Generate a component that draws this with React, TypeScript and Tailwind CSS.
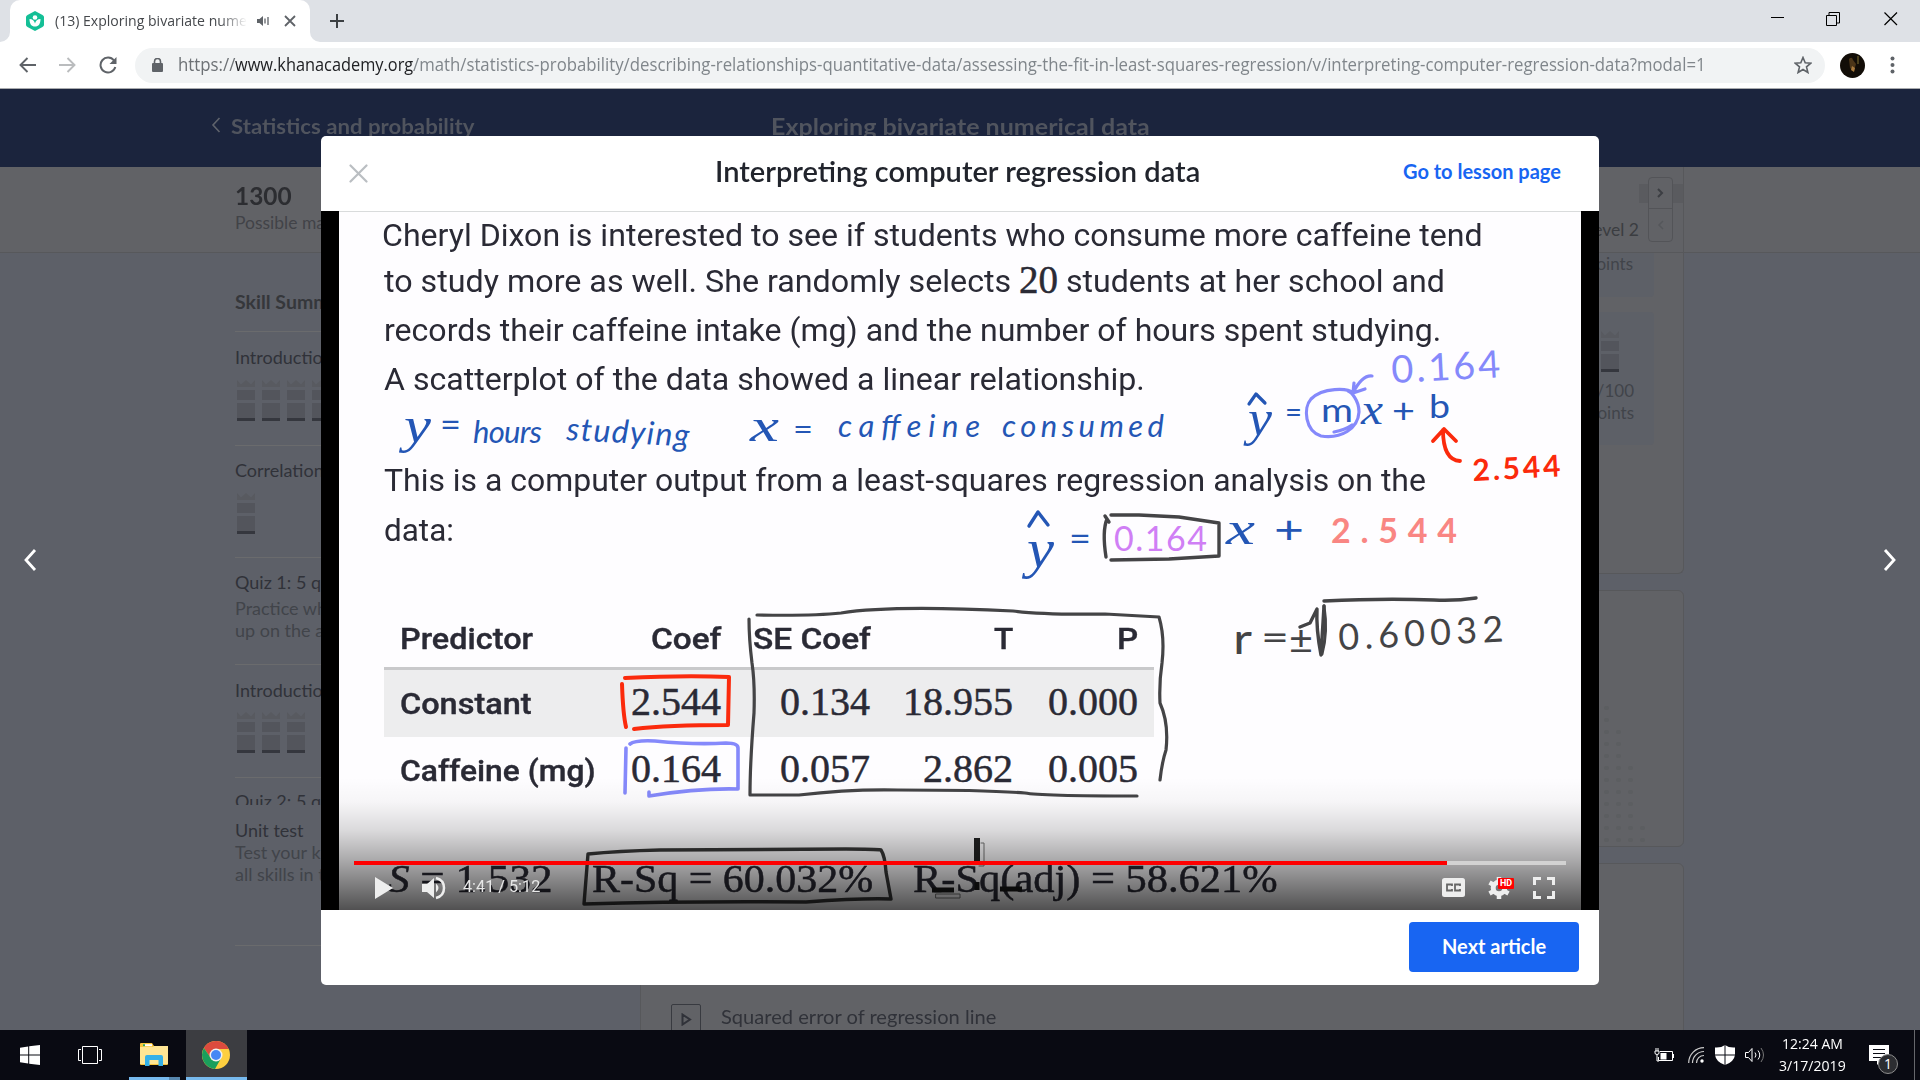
import React, { useLayoutEffect, useRef, useState } from "react";

/** Single line of text stretched or squeezed to an exact width. */
function Fit({ w, className = "", children }: { w: number; className?: string; children: React.ReactNode }) {
  const ref = useRef<HTMLSpanElement>(null);
  const [k, setK] = useState(1);
  useLayoutEffect(() => {
    if (ref.current) setK(w / ref.current.offsetWidth);
  }, [w]);
  return (
    <span className={"block shrink-0 whitespace-nowrap " + className} style={{ width: w }}>
      <span ref={ref} className="inline-block origin-left" style={{ transform: `scaleX(${k})` }}>
        {children}
      </span>
    </span>
  );
}

function Crown() {
  return (
    <svg width="18" height="41" viewBox="0 0 18 41" className="shrink-0">
      <path d="M0 0l4 4.500 5-4.500 5 4.500 4-4.500v7H0z" fill="#585a60" />
      <rect y="10" width="18" height="10" fill="#53555c" />
      <rect y="23" width="18" height="15" fill="#53555c" />
      <rect y="38" width="18" height="3" fill="#35373e" />
    </svg>
  );
}

function TabStrip() {
  return (
    <div className="flex h-[42px] shrink-0 items-stretch bg-[#dee1e6]">
      <svg width="10" height="42" viewBox="0 0 10 42"><path d="M10 32v10H0a10 10 0 0 0 10-10z" fill="#fff" /></svg>
      <div className="flex w-[300px] items-center rounded-t-[10px] bg-white pl-4">
        <svg width="18" height="20" viewBox="0 0 18 20">
          <path d="M9 0l7.500 4Q18 5 18 6v8q0 1-1.500 2L9 20l-7.500-4Q0 15 0 14V6q0-1 1.500-2z" fill="#14bf96" />
          <circle cx="9" cy="6.500" r="2.300" fill="#fff" />
          <path d="M3.500 8c3 0 5 2 5.500 4.500C9.500 10 11.500 8 14.500 8c0 5-2 7.500-5.500 7.500S3.500 13 3.500 8z" fill="#fff" />
        </svg>
        <div className="ml-[11px] w-[192px] text-[14.500px] text-[#45484c] [mask-image:linear-gradient(to_right,#000_86%,transparent)]">
          <Fit w={192}>(13) Exploring bivariate nume</Fit>
        </div>
        <svg className="ml-[10px]" width="13" height="12" viewBox="0 0 13 12">
          <path d="M0 4h2.500L6 1v10L2.500 8H0z" fill="#5f6368" />
          <path d="M8 3.500v5M11 2v8" stroke="#5f6368" strokeWidth="1.300" />
        </svg>
        <svg className="ml-[14px]" width="12" height="12" viewBox="0 0 12 12"><path d="M1 1l10 10M11 1L1 11" stroke="#5f6368" strokeWidth="1.800" /></svg>
      </div>
      <svg width="10" height="42" viewBox="0 0 10 42"><path d="M0 32v10h10A10 10 0 0 1 0 32z" fill="#fff" /></svg>
      <svg className="ml-[9px] mt-[13px]" width="16" height="16" viewBox="0 0 16 16"><path d="M8 1v14M1 8h14" stroke="#3c4043" strokeWidth="2" /></svg>
      <div className="ml-auto flex pr-[22px] pt-3">
        <svg width="14" height="13"><path d="M1 5.500h13" stroke="#000" /></svg>
        <svg className="ml-[42px]" width="14" height="14"><path d="M.5 3.500h10v10H.5zM3 3V.5h10.500V11H11" fill="none" stroke="#000" /></svg>
        <svg className="ml-[44px]" width="14" height="14"><path d="M.5.5l12.500 12.500M13 .5L.5 13" stroke="#000" strokeWidth="1.200" /></svg>
      </div>
    </div>
  );
}

function Toolbar() {
  return (
    <div className="flex h-[47px] shrink-0 items-center border-b border-[#a9abae] bg-white">
      <svg className="ml-[19px]" width="17" height="16" viewBox="0 0 17 16"><path d="M17 8H2M8.500 1L1.500 8l7 7" fill="none" stroke="#5f6368" strokeWidth="1.900" /></svg>
      <svg className="ml-[23px]" width="17" height="16" viewBox="0 0 17 16"><path d="M0 8h15M8.500 1l7 7-7 7" fill="none" stroke="#babcbe" strokeWidth="1.900" /></svg>
      <svg className="ml-[23px]" width="18" height="18" viewBox="0 0 18 18">
        <path d="M15 4.500A7.500 7.500 0 1 0 16.300 11" fill="none" stroke="#5f6368" strokeWidth="2" />
        <path d="M17.500 1v7h-7z" fill="#5f6368" />
      </svg>
      <div className="ml-[18px] flex h-[35px] w-[1690px] items-center rounded-full bg-[#f1f3f4] pl-[17px] pr-[13px]">
        <svg width="11" height="15" viewBox="0 0 11 15">
          <rect y="5" width="11" height="9" rx="1" fill="#5f6368" />
          <path d="M2.500 6V3.500a3 3 0 0 1 6 0V6" fill="none" stroke="#5f6368" strokeWidth="1.600" />
        </svg>
        <div className="-mt-0.5 ml-[15px] flex text-[18px] leading-[30px] text-[#80868b]">
          <Fit w={57} className="text-[#6d7175]">https://</Fit>
          <Fit w={178} className="text-[#202124]">www.khanacademy.org</Fit>
          <Fit w={1293}>/math/statistics-probability/describing-relationships-quantitative-data/assessing-the-fit-in-least-squares-regression/v/interpreting-computer-regression-data?modal=1</Fit>
        </div>
        <svg className="ml-auto" width="18" height="18" viewBox="0 0 18 18"><path d="M9 1.500l2.200 5.300 5.600.4-4.300 3.700 1.400 5.600L9 13.500l-4.900 3 1.400-5.600L1.200 7.200l5.600-.4z" fill="none" stroke="#5f6368" strokeWidth="1.600" /></svg>
      </div>
      <svg className="ml-[15px]" width="25" height="25" viewBox="0 0 25 25">
        <circle cx="12.500" cy="12.500" r="12.500" fill="#120d07" />
        <path d="M9 6q3-3 4 1l3 4-2 7-4-3z" fill="#4b3518" />
        <path d="M12 13l3 2-1 4-3-2z" fill="#a8793d" />
        <path d="M18 3v8" stroke="#5c5126" strokeWidth="1.500" />
      </svg>
      <svg className="ml-[25px]" width="5" height="18" viewBox="0 0 5 18" fill="#5f6368"><circle cx="2.500" cy="2.500" r="2" /><circle cx="2.500" cy="9" r="2" /><circle cx="2.500" cy="15.500" r="2" /></svg>
    </div>
  );
}

function Sidebar() {
  const rule = "border-b border-[#6a6b6d]";
  return (
    <div className="w-[405px] shrink-0 pt-[35px] text-[18px] text-[#303239]">
      <div className={"h-[44px] text-[19.500px] font-bold leading-[28px] text-[#35373b] " + rule}>Skill Summary</div>
      <div className={"h-[114px] pt-[12px] " + rule}>
        <div className="leading-[26px]">Introduction to scatterplots</div>
        <div className="ml-0.5 mt-[10px] flex gap-[7px]"><Crown /><Crown /><Crown /><Crown /></div>
      </div>
      <div className={"h-[112px] pt-[11px] " + rule}>
        <div className="leading-[26px]">Correlation coefficients</div>
        <div className="ml-0.5 mt-[10px] flex"><Crown /></div>
      </div>
      <div className={"h-[107px] pt-[11px] " + rule}>
        <div className="leading-[26px]">Quiz 1: 5 questions</div>
        <div className="mt-0.5 leading-[22px] text-[#41444a]">Practice what you’ve learned, and level<br />up on the above skills</div>
      </div>
      <div className={"h-[113px] pt-[12px] " + rule}>
        <div className="leading-[26px]">Introduction to trend lines</div>
        <div className="ml-0.5 mt-[9px] flex gap-[7px]"><Crown /><Crown /><Crown /></div>
      </div>
      <div className="h-[27px] overflow-hidden pt-[10px] leading-[26px]">Quiz 2: 5 questions</div>
      <div className={"h-[141px] pt-[12px] " + rule}>
        <div className="leading-[26px]">Unit test</div>
        <div className="-mt-0.5 leading-[22px] text-[#41444a]">Test your knowledge of<br />all skills in this unit</div>
      </div>
    </div>
  );
}

const dotColumns = [12, 10, 7, 2];

function CoursePage() {
  return (
    <div className="flex h-full flex-col">
      <div className="flex h-[78px] shrink-0 pl-[211px] pt-[16px] text-[20px] font-bold leading-[42px] text-[#50545e]">
        <svg className="mt-3" width="10" height="16" viewBox="0 0 10 16"><path d="M8.500 1L2 8l6.500 7" fill="none" stroke="#5f636c" strokeWidth="1.600" /></svg>
        <Fit w={243} className="ml-[10px]">Statistics and probability</Fit>
        <Fit w={379} className="ml-[297px] text-[23px]">Exploring bivariate numerical data</Fit>
      </div>
      <div className="flex h-[86px] shrink-0 border-b border-[#57585b] bg-[#616266] pl-[235px]">
        <div className="w-[500px] pt-[14px]">
          <div className="text-[24px] font-bold leading-[30px] text-[#2c2d31]"><Fit w={57}>1300</Fit></div>
          <div className="text-[17.500px] leading-[24px] text-[#414348]">Possible mastery points</div>
        </div>
        <div className="flex w-[949px] justify-end border-r border-[#57585b]">
          <div className="pt-[49px] text-[17.500px] leading-[28px] text-[#3b3d41]">Level 2</div>
          <div className="mt-[17px] h-[19px] w-[9px] bg-[#5a5b5f]" />
          <div className="mt-[10px] flex h-[65px] w-[25px] flex-col rounded-[4px] border border-[#535458] bg-[#616266]">
            <div className="flex h-[31px] items-center justify-center border-b border-[#535458]"><svg width="7" height="10"><path d="M1 1l4 4-4 4" fill="none" stroke="#3c3e43" strokeWidth="2" /></svg></div>
            <div className="flex grow items-center justify-center"><svg width="7" height="10"><path d="M6 1L2 5l4 4" fill="none" stroke="#55575b" strokeWidth="1.500" /></svg></div>
          </div>
          <div className="mt-[17px] h-[19px] w-[10px] bg-[#5a5b5f]" />
        </div>
      </div>
      <div className="flex min-h-0 grow pl-[235px]">
        <Sidebar />
        <div className="flex w-[1044px] shrink-0 flex-col gap-4 text-[18px] text-[#303239]">
          <div className="flex h-[321px] shrink-0 flex-col items-end rounded-b-[6px] border border-t-0 border-[#57585b] bg-[#616266] pr-[29px]">
            <div className="h-[44px] w-[120px] rounded-b-[4px] bg-[#5d6067] pr-[21px] text-right text-[17px] leading-[22px] text-[#41444a]">points</div>
            <div className="mt-[15px] flex h-[133px] w-[120px] flex-col items-end rounded-[4px] bg-[#5d6067] pr-[20px] text-[17px] leading-[22px] text-[#41444a]">
              <div className="mb-[8px] mr-[15px] mt-[19px]"><Crown /></div>
              <div>0/100</div>
              <div>points</div>
            </div>
          </div>
          <div className="flex h-[257px] shrink-0 items-end justify-end gap-[7px] rounded-[6px] border border-[#57585b] bg-[#616266] pb-1 pr-[38px]">
            {dotColumns.map((n, i) => (
              <div key={i} className="flex flex-col gap-[8px]">
                {Array.from({ length: n }, (_, j) => <div key={j} className="h-1 w-[5px] rounded-full bg-[#5c5e61]" />)}
              </div>
            ))}
          </div>
          <div className="h-[220px] shrink-0 rounded-t-[6px] border border-[#57585b] bg-[#616266] pl-[30px] pt-[140px]">
            <div className="flex">
              <div className="flex h-[30px] w-[30px] items-center justify-center rounded-[2px] border-[1.500px] border-[#383a40]">
                <svg width="11" height="13"><path d="M1.500 1.500l7.500 5-7.500 5z" fill="none" stroke="#303239" strokeWidth="2" /></svg>
              </div>
              <Fit w={275} className="-mt-0.5 ml-[20px] text-[19px] leading-[30px]">Squared error of regression line</Fit>
            </div>
          </div>
        </div>
      </div>
    </div>
  );
}

/** Ink annotations drawn over the exercise; coordinates are screen pixels. */
function Ink() {
  const t = (x: number, y: number, s: string, w: number, size: number, fill: string, extra = "", rot = 0) => (
    <text x={x} y={y} textLength={w} lengthAdjust={s.length > 1 ? "spacing" : "spacingAndGlyphs"} fontSize={size} fill={fill} className={extra} transform={rot ? `rotate(${rot} ${x} ${y})` : undefined}>
      {s}
    </text>
  );
  const blue = "#2456b5";
  const violet = "#8589fb";
  const gray = "#444446";
  const red = "#fb2a0c";
  const serif = "font-['Liberation_Serif',serif] italic";
  const it = "font-['Lato',sans-serif] italic";
  return (
    <svg className="absolute left-0 top-0" width="1242" height="699" viewBox="339 211 1242 699" fontFamily="Lato, sans-serif" fill="none" strokeLinecap="round" strokeLinejoin="round">
      {t(404, 442, "y", 27, 50, blue, serif)}
      {t(440, 437, "=", 21, 34, blue)}
      {t(473, 443, "hours", 69, 31, blue, it)}
      {t(566, 440, "studying", 123, 32, blue, it, 3)}
      {t(750, 441, "x", 29, 46, blue, serif)}
      {t(793, 440, "=", 20, 30, blue)}
      {t(838, 437, "caffeine", 142, 31, blue, it)}
      {t(1002, 437, "consumed", 162, 31, blue, it)}

      {t(1248, 435, "y", 24, 50, blue, serif)}
      {t(1285, 423, "=", 17, 30, blue)}
      {t(1321, 422, "m", 32, 32, blue)}
      {t(1361, 424, "x", 22, 44, blue, serif)}
      {t(1392, 423, "+", 23, 34, blue)}
      {t(1429, 418, "b", 21, 32, blue)}
      <path d="M1249 404l7-10 9 9" stroke={blue} strokeWidth="3.200" />
      {t(1392, 383, "0.164", 109, 38, violet, "", -3)}
      <path d="M1353 393c-5-5-30-6-42 6-8 9-6 32 10 37 20 3 37-7 38-24 0-12-8-20-11-21M1334 432q11-2 18-7" stroke={violet} strokeWidth="3.200" />
      <path d="M1372 376q-10-1-19 17l1-10M1353 393l12-4" stroke={violet} strokeWidth="3.200" />
      <path d="M1460 461q-17-1-17-31M1433 441l11-12 12 12" stroke={red} strokeWidth="3.800" />
      {t(1473, 481, "2.544", 88, 30, red, "font-bold", -3)}

      {t(1027, 567, "y", 27, 54, blue, serif)}
      {t(1069, 551, "=", 22, 34, blue)}
      <path d="M1029 526l9-14 10 13" stroke={blue} strokeWidth="3.400" />
      {t(1114, 551, "0.164", 93, 34, "#d07ff5")}
      <path d="M1107 519q-5 12-1 38M1105 516l4 6M1111 515l28 0 40 2 40 6v33l-50 3-58 1" stroke={gray} strokeWidth="3.400" />
      {t(1226, 544, "x", 29, 46, blue, serif)}
      {t(1274, 543, "+", 30, 38, blue)}
      {t(1331, 543, "2.544", 126, 34, "#f98683", "font-bold")}

      {t(1233, 654, "r", 19, 42, gray)}
      {t(1261, 650, "=", 28, 36, gray)}
      {t(1289, 654, "±", 24, 38, gray)}
      <path d="M1300 627l10-4 7-14q-1 20 4 46l3-49M1324 601q60-3 110-1 22 1 42-2" stroke={gray} strokeWidth="3.400" />
      <path d="M1324 606q4 26-2 48" stroke={gray} strokeWidth="3" />
      {t(1339, 650, "0.60032", 165, 36, gray, "", -3)}

      <path d="M757 615q56 1 84-2 50-8 172-2 30 4 92 3l54 3q6 20 3 46-3 20-2 40 9 20 6 47-4 12-6 30" stroke={gray} strokeWidth="3.200" />
      <path d="M749 619q0 20 3 44 3 20 2 50-4 50-4 82h49q50-6 99-5 90 0 127 3 15 3 112 3" stroke={gray} strokeWidth="3.200" />
      <path d="M625 678q60-3 104-1l-1 48q-60 0-94 4M622 684q1 30 4 43" stroke={red} strokeWidth="4" />
      <path d="M630 744q5-4 25-3 40 4 71 2 12 0 12 5v41q-40-1-89 7v-4M626 748l-1 45" stroke={violet} strokeWidth="3.600" />
      <path d="M588 854q30-3 72-4l186-1q30 0 35 1 4 6 5 22l5 27q-30-1-85 3-120-1-222 2z" stroke="#383838" strokeWidth="3.400" />
      <path d="M977 838v24" stroke="#222" strokeWidth="6" strokeLinecap="butt" />
      <path d="M981 843h3v23h-5M936 894h24v4h-24z" stroke="#777" />
      <path d="M932 890h22M1000 889h22M977 882v8" stroke="#171717" strokeWidth="5" strokeLinecap="butt" />
    </svg>
  );
}

function PlayerControls() {
  return (
    <div className="absolute inset-0 flex flex-col justify-end bg-[linear-gradient(to_top,#000000ae_0%,#00000078_4.3%,#00000056_7%,#00000024_11.4%,#00000008_15.5%,#00000000_19%)]">
      <div className="mx-[15px] flex h-1 bg-[#d2d2d2]"><div className="w-[1093px] bg-[#fe0000]" /></div>
      <div className="flex h-[45px] items-center pl-9 pr-[26px]">
        <svg width="18" height="22" viewBox="0 0 18 22"><path d="M0 0l18 11L0 22z" fill="#eee" /></svg>
        <svg className="ml-[29px]" width="24" height="24" viewBox="0 0 24 24">
          <path d="M0 8h5l7-6v20l-7-6H0z" fill="#eee" />
          <path d="M14 7.500q5 4.500 0 9z" fill="#eee" />
          <path d="M14 2q8 2 8 10t-8 10" fill="none" stroke="#eee" strokeWidth="2.500" />
        </svg>
        <Fit w={77} className="-mt-0.5 ml-[17px] font-['Roboto',sans-serif] text-[16px] leading-[20px] text-[#e8e8e8]">4:41 / 5:12</Fit>
        <svg className="ml-auto" width="23" height="19" viewBox="0 0 23 19">
          <rect width="23" height="19" rx="2.500" fill="#eee" />
          <path d="M10 8V6.500H5v6h5V11M18 8V6.500h-5v6h5V11" fill="none" stroke="#666" strokeWidth="1.800" />
        </svg>
        <div className="relative ml-[23px]">
          <svg width="22" height="22" viewBox="0 0 22 22">
            <circle cx="11" cy="11" r="5.800" fill="none" stroke="#eee" strokeWidth="5" />
            <path d="M11 0v4M11 18v4M1.500 5.500L5 7.500M17 14.500l3.500 2M1.500 16.500L5 14.500M17 7.500l3.500-2" stroke="#eee" strokeWidth="4.500" />
          </svg>
          <div className="absolute left-[10px] top-px h-[11px] w-4 rounded-[1px] bg-[#f00] text-center font-['Roboto',sans-serif] text-[9px] font-bold leading-[11px] text-white">HD</div>
        </div>
        <svg className="ml-[23px]" width="22" height="22" viewBox="0 0 22 22"><path d="M1.500 8V1.500H8M14 1.500h6.500V8M20.500 14v6.500H14M8 20.500H1.500V14" fill="none" stroke="#eee" strokeWidth="3" /></svg>
      </div>
    </div>
  );
}

function Row({ label, lw, vals }: { label: string; lw: number; vals: string[] }) {
  return (
    <div className="flex h-[67px]">
      <div className="w-[217px] pl-[16px] pt-px font-['Roboto',sans-serif] text-[30px] font-medium leading-[66px] [-webkit-text-stroke:0.4px]"><Fit w={lw}>{label}</Fit></div>
      <div className="w-[120px] text-right">{vals[0]}</div>
      <div className="w-[149px] text-right">{vals[1]}</div>
      <div className="w-[143px] text-right">{vals[2]}</div>
      <div className="w-[125px] text-right">{vals[3]}</div>
    </div>
  );
}

function Video() {
  return (
    <div className="flex h-[699px] bg-black px-[18px]">
      <div className="relative h-full w-full overflow-hidden border-t border-[#d9dbdc] bg-[#fefdff] text-[#2a2a35]">
        <div className="-mt-px h-[344px] pl-[43px] font-['Roboto',sans-serif] text-[31px] leading-[49px]">
          <div className="h-[46px]"><Fit w={1101}>Cheryl Dixon is interested to see if students who consume more caffeine tend</Fit></div>
          <div className="flex h-[49px] pl-0.5">
            <Fit w={627}>to study more as well. She randomly selects</Fit>
            <span className="-mt-0.5 ml-[8px] w-[40px] font-['Liberation_Serif',serif] text-[39px] [-webkit-text-stroke:0.5px]">20</span>
            <Fit w={379} className="ml-[7px]">students at her school and</Fit>
          </div>
          <div className="h-[49px] pl-0.5"><Fit w={1057}>records their caffeine intake (mg) and the number of hours spent studying.</Fit></div>
          <div className="h-[101px] pl-0.5"><Fit w={761}>A scatterplot of the data showed a linear relationship.</Fit></div>
          <div className="h-[50px] pl-0.5"><Fit w={1042}>This is a computer output from a least-squares regression analysis on the</Fit></div>
          <div className="h-[49px] pl-0.5"><Fit w={70}>data:</Fit></div>
        </div>
        <div className="ml-[45px] w-[770px] font-['Liberation_Serif',serif] text-[40px] leading-[63px] [-webkit-text-stroke:0.5px]">
          <div className="flex h-[115px] items-end border-b-[3px] border-[#c9c9cb] font-['Roboto',sans-serif] text-[30px] font-medium leading-[57px] [-webkit-text-stroke:0.4px]">
            <Fit w={133} className="ml-[16px]">Predictor</Fit>
            <Fit w={70} className="ml-[118px]">Coef</Fit>
            <Fit w={118} className="ml-[32px]">SE Coef</Fit>
            <Fit w={19} className="ml-[123px]">T</Fit>
            <Fit w={21} className="ml-[104px]">P</Fit>
          </div>
          <div className="bg-[#ededee]"><Row label="Constant" lw={132} vals={["2.544", "0.134", "18.955", "0.000"]} /></div>
          <Row label="Caffeine (mg)" lw={196} vals={["0.164", "0.057", "2.862", "0.005"]} />
        </div>
        <div className="ml-[49px] mt-[45px] flex font-['Liberation_Serif',serif] text-[40px] leading-[60px] [-webkit-text-stroke:0.5px]">
          <Fit w={165}><i>S</i> = 1.532</Fit>
          <Fit w={281} className="ml-[39px]">R-Sq = 60.032%</Fit>
          <Fit w={365} className="ml-[40px]">R-Sq(adj) = 58.621%</Fit>
        </div>
        <div className="absolute -top-px left-0"><Ink /></div>
        <PlayerControls />
      </div>
    </div>
  );
}

function Modal() {
  return (
    <div className="absolute left-[321px] top-[47px] w-[1278px] overflow-hidden rounded-[5px] bg-white">
      <div className="flex h-[75px] items-start pl-[28px] pt-[14px] leading-[42px]">
        <svg className="mt-[14px]" width="19" height="19" viewBox="0 0 19 19"><path d="M1.500 1.500l16 16M17.500 1.500l-16 16" stroke="#babec2" strokeWidth="2.200" strokeLinecap="round" /></svg>
        <Fit w={485} className="ml-[347px] text-[28.500px] font-semibold text-[#21242c]">Interpreting computer regression data</Fit>
        <Fit w={158} className="ml-[203px] text-[20px] font-bold text-[#1865f2]">Go to lesson page</Fit>
      </div>
      <Video />
      <div className="flex h-[75px] justify-end pr-5 pt-3">
        <div className="flex h-[50px] w-[170px] justify-center rounded-[4px] bg-[#1865f2] text-[20px] font-bold leading-[48px] text-white"><Fit w={104}>Next article</Fit></div>
      </div>
    </div>
  );
}

function Taskbar() {
  return (
    <div className="flex h-[50px] shrink-0 items-center bg-[#090a12] text-white">
      <svg className="ml-5" width="20" height="20" viewBox="0 0 20 20" fill="#fff"><path d="M0 2.800L8.200 1.500v7.900H0zM9.200 1.300L20 0v9.400H9.200zM0 10.500h8.200v8L0 17.300zM9.200 10.500H20V20L9.200 18.700z" /></svg>
      <svg className="ml-[38px]" width="24" height="18" viewBox="0 0 24 18" fill="none" stroke="#fff"><path d="M4.500.5h15v17h-15zM3 3.500H.5v11H3M21 3.500h2.500v11H21" /></svg>
      <div className="ml-[27px] flex h-full w-[51px] flex-col justify-between">
        <svg className="ml-[11px] mt-[13px]" width="28" height="24" viewBox="0 0 28 24">
          <path d="M0 1q0-1 1-1h11l2 3h13q1 0 1 1v17q0 1-1 1H1q-1 0-1-1z" fill="#f8c63d" />
          <path d="M0 4h13l1-1h14v18H0z" fill="#ffe694" />
          <rect x="3" y="1.200" width="9" height="2" fill="#fff" />
          <rect x="3" y="1.200" width="2" height="2" fill="#34a853" />
          <path d="M5 23V14q0-2 2-2h14q2 0 2 2v9h-4.500v-6h-9v6z" fill="#35b1e8" />
        </svg>
        <div className="flex h-[3px]"><div className="w-10 bg-[#76b9ed]" /><div className="w-[11px] bg-[#5787ae]" /></div>
      </div>
      <div className="ml-1.5 flex h-full w-[61px] flex-col justify-between bg-[#3c3d41]">
        <svg className="ml-4 mt-[11px]" width="28" height="28" viewBox="0 0 28 28">
          <circle cx="14" cy="14" r="14" fill="#fdcf3f" />
          <path d="M14 8h12.600A14 14 0 0 0 1.900 7L8.800 17z" fill="#dc4b3e" />
          <path d="M1.900 7A14 14 0 0 0 13 27.970L19.200 17 14 20 8.800 17z" fill="#1a9f5c" />
          <circle cx="14" cy="14" r="6.500" fill="#f1f1f1" />
          <circle cx="14" cy="14" r="5" fill="#4688f4" />
        </svg>
        <div className="h-[3px] bg-[#76b9ed]" />
      </div>
      <div className="ml-auto flex h-full items-center">
        <svg width="21" height="14" viewBox="0 0 21 14" fill="none" stroke="#fff">
          <path d="M6 3.500h12.500v9h-14V9M19.500 6v4" /><rect x="7" y="5.500" width="5" height="5.500" fill="#fff" />
          <path d="M1 3h4v2q0 1.500-2 1.500T1 5zM2 0v3M4 0v3M3 7v6h2" />
        </svg>
        <svg className="ml-[13px]" width="16" height="16" viewBox="0 0 16 16" fill="none" stroke="#fff">
          <path d="M.7 16A15.300 15.300 0 0 1 16 .7M4.500 16A11.500 11.500 0 0 1 16 4.500M8.500 16A7.500 7.500 0 0 1 16 8.500" stroke="#ccc" strokeWidth="1.200" /><circle cx="14" cy="14" r="1.700" fill="#fff" stroke="none" />
        </svg>
        <svg className="ml-[11px]" width="20" height="20" viewBox="0 0 20 20"><path d="M10 0q4 3 10 2.500V10q-1 7-10 10Q1 17 0 10V2.500Q6 3 10 0z" fill="#fff" /><path d="M10 0v20M0 10h20" stroke="#090a12" /></svg>
        <svg className="ml-[10px]" width="20" height="18" viewBox="0 0 20 18" fill="none" stroke="#fff">
          <path d="M.5 6.500h3l3.500-4v13l-3.500-4h-3z" /><path d="M10 6.500q2 2.500 0 5M13 4.500q3.500 4.500 0 9" /><path d="M16 2q5 7 0 14" stroke="#777" />
        </svg>
        <div className="ml-[14px] flex w-[67px] flex-col items-center text-[14.500px] leading-[22.500px]">
          <Fit w={61}>12:24 AM</Fit>
          <Fit w={67}>3/17/2019</Fit>
        </div>
        <div className="relative ml-[23px] h-5 w-[45px]">
          <svg width="20" height="20" viewBox="0 0 20 20"><path d="M0 0h20v16H12l-4 4v-4H0z" fill="#fff" /><path d="M4 4.500h12M4 8.500h12M4 12.500h8" stroke="#090a12" /></svg>
          <div className="absolute left-[9px] top-[9px] flex h-[20px] w-[20px] items-center justify-center rounded-full border border-[#8d8d8d] bg-[#2c2d31] text-[14px] leading-none">1</div>
        </div>
        <div className="h-full w-px bg-[#66676c]" />
        <div className="w-[5px]" />
      </div>
    </div>
  );
}

export default function App() {
  return (
    <div className="flex h-[1080px] w-[1920px] flex-col overflow-hidden bg-[#5d6068] font-['Open_Sans','Noto_Sans',sans-serif]">
      <TabStrip />
      <Toolbar />
      <div className="relative h-[941px] overflow-hidden font-['Lato',sans-serif]">
        <div className="h-full bg-[linear-gradient(#1b243d_78px,#5d6068_78px)]"><CoursePage /></div>
        <svg className="absolute left-[23px] top-[459px]" width="14" height="24" viewBox="0 0 14 24"><path d="M12 2L3 12l9 10" fill="none" stroke="#fff" strokeWidth="2.800" /></svg>
        <svg className="absolute left-[1883px] top-[459px]" width="14" height="24" viewBox="0 0 14 24"><path d="M2 2l9 10-9 10" fill="none" stroke="#fff" strokeWidth="2.800" /></svg>
        <Modal />
      </div>
      <Taskbar />
    </div>
  );
}
